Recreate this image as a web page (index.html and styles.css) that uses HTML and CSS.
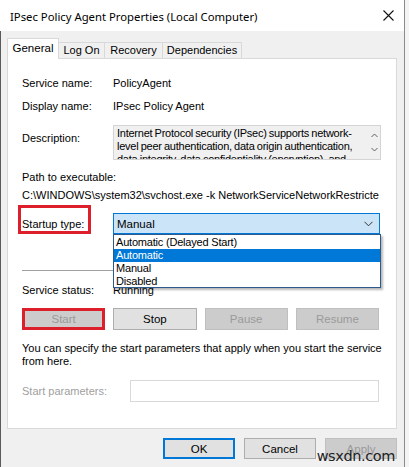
FILE: index.html
```html
<!DOCTYPE html>
<html>
<head>
<meta charset="utf-8">
<link rel="stylesheet" href="styles.css">
</head>
<body>
<div class="window">
  <div class="titlebar">
    <span class="title">IPsec Policy Agent Properties (Local Computer)</span>
    <svg class="close" width="11" height="11" viewBox="0 0 11 11"><path d="M0.5 0.5 L10.5 10.5 M10.5 0.5 L0.5 10.5" stroke="#111" stroke-width="1.1" fill="none"/></svg>
  </div>
  <div class="client">
    <div class="tabs">
      <div class="tab active">General</div>
      <div class="tab t-logon">Log On</div>
      <div class="tab t-recovery">Recovery</div>
      <div class="tab t-dep">Dependencies</div>
    </div>
    <div class="panel">
      <div class="row r-service"><span class="label">Service name:</span><span>PolicyAgent</span></div>
      <div class="row r-display"><span class="label">Display name:</span><span>IPsec Policy Agent</span></div>
      <div class="row r-desc">
        <span class="label desc-label">Description:</span>
        <div class="descbox">
          <div class="desctext">Internet Protocol security (IPsec) supports network-level peer authentication, data origin authentication, data integrity, data confidentiality (encryption), and replay protection.</div>
          <div class="scroll">
            <svg width="7" height="5" viewBox="0 0 7 5"><path d="M0.5 4 L3.5 1 L6.5 4" stroke="#606060" stroke-width="1" fill="none"/></svg>
            <svg width="7" height="5" viewBox="0 0 7 5"><path d="M0.5 1 L3.5 4 L6.5 1" stroke="#606060" stroke-width="1" fill="none"/></svg>
          </div>
        </div>
      </div>
      <div class="pathlabel">Path to executable:</div>
      <div class="pathvalue">C:\WINDOWS\system32\svchost.exe -k NetworkServiceNetworkRestricted</div>
      <div class="row r-startup">
        <span class="label startup-label">Startup type:<span class="mark mark-label"></span></span>
        <div class="combo">
          <span>Manual</span>
          <svg class="chev" width="9" height="6" viewBox="0 0 9 6"><path d="M0.5 0.8 L4.5 4.8 L8.5 0.8" stroke="#333" stroke-width="1" fill="none"/></svg>
          <div class="droplist">
            <div class="item">Automatic (Delayed Start)</div>
            <div class="item sel">Automatic</div>
            <div class="item">Manual</div>
            <div class="item">Disabled</div>
          </div>
        </div>
      </div>
      <div class="sep"></div>
      <div class="row r-status"><span class="label">Service status:</span><span>Running</span></div>
      <div class="buttons">
        <div class="btn disabled start">Start<span class="mark mark-btn"></span></div>
        <div class="btn">Stop</div>
        <div class="btn disabled">Pause</div>
        <div class="btn disabled">Resume</div>
      </div>
      <div class="help">You can specify the start parameters that apply when you start the service from here.</div>
      <div class="row r-params">
        <span class="label params-label">Start parameters:</span>
        <div class="paramsbox"></div>
      </div>
    </div>
    <div class="footer">
      <div class="fbtn default">OK</div>
      <div class="fbtn">Cancel</div>
      <div class="fbtn fdisabled">Apply</div>
    </div>
  </div>
  <div class="watermark">wsxdn.com</div>
</div>
</body>
</html>
```

FILE: styles.css
```css
* { box-sizing: border-box; }
html, body {
  margin: 0;
  padding: 0;
  background: #f4f4f4;
}
body {
  width: 409px;
  height: 467px;
  overflow: hidden;
  font-family: "Liberation Sans", Arial, sans-serif;
  font-size: 11px;
  color: #000;
}
.window {
  position: relative;
  width: 405px;
  height: 467px;
  border-right: 1px solid #8c8c8c;
  display: flex;
  flex-direction: column;
}
.titlebar {
  height: 31px;
  background: #fff;
  display: flex;
  align-items: center;
  padding-left: 10px;
  padding-right: 10px;
  justify-content: space-between;
}
.title {
  font-family: "Noto Sans", "Open Sans", sans-serif;
  font-size: 11.3px;
  color: #000;
  margin-top: 1px;
}
.close { display: block; }
.client {
  flex: 1;
  background: #f0f0f0;
  border-left: 1px solid #5a5a5a;
  padding: 7px 0 0 6px;
}
.tabs {
  display: flex;
  align-items: flex-end;
  height: 20px;
  position: relative;
  z-index: 2;
}
.tab {
  height: 16px;
  border: 1px solid #d9d9d9;
  border-bottom: none;
  border-left: none;
  background: #f0f0f0;
  text-align: center;
  line-height: 15px;
}
.tab.active {
  height: 21px;
  margin-bottom: -1px;
  background: #fff;
  border-left: 1px solid #d9d9d9;
  width: 52px;
  line-height: 17px;
  padding-top: 1px;
  font-size: 11.5px;
}
.t-logon { width: 46px; }
.t-recovery { width: 58px; }
.t-dep { width: 79px; }
.panel {
  width: 390px;
  height: 371px;
  background: #fff;
  border: 1px solid #d9d9d9;
  padding: 17px 0 0 14px;
  display: flex;
  flex-direction: column;
}
.row {
  display: flex;
  align-items: center;
  line-height: 14px;
}
.label { width: 91px; flex: none; }
.r-service { height: 14px; }
.r-display { height: 14px; margin-top: 9px; }
.r-desc { margin-top: 12px; align-items: flex-start; }
.desc-label { padding-top: 6px; }
.descbox {
  width: 268px;
  height: 35px;
  background: #f0f0f0;
  border: 1px solid #d4d4d4;
  display: flex;
  overflow: hidden;
}
.desctext {
  width: 254px;
  flex: none;
  padding: 1px 0 0 3px;
  line-height: 13px;
  letter-spacing: -0.25px;
  word-spacing: -0.5px;
}
.scroll {
  flex: 1;
  display: flex;
  flex-direction: column;
  align-items: center;
  gap: 9px;
  padding-top: 7px;
}
.scroll svg { display: block; }
.pathlabel { margin-top: 10px; line-height: 14px; }
.pathvalue { margin-top: 4px; line-height: 14px; white-space: nowrap; overflow: hidden; width: 357px; }
.r-startup { margin-top: 11px; height: 21px; }
.startup-label { position: relative; }
.mark {
  position: absolute;
  border: 3px solid #dc1f2b;
}
.mark-label { left: -4px; top: -12px; width: 73px; height: 29px; }
.combo {
  position: relative;
  width: 267px;
  height: 21px;
  background: #cce4f7;
  border: 1px solid #0078d7;
  display: flex;
  align-items: center;
  justify-content: space-between;
  padding: 0 6px 0 3px;
  font-size: 11.5px;
}
.chev { display: block; }
.droplist {
  position: absolute;
  left: -1px;
  top: 20px;
  width: 268px;
  height: 54px;
  background: #fff;
  border: 1px solid #2c5a8c;
  box-shadow: 2px 2px 2px rgba(0,0,0,0.28);
  z-index: 5;
  padding-top: 1px;
  font-size: 11px;
  letter-spacing: -0.2px;
}
.item {
  height: 13px;
  line-height: 13px;
  padding-left: 2px;
}
.item.sel { background: #0078d7; color: #fff; }
.sep {
  margin-top: 36px;
  width: 357px;
  height: 1px;
  background: #a0a0a0;
}
.r-status { margin-top: 12px; height: 14px; }
.buttons {
  margin-top: 11px;
  width: 357px;
  display: grid;
  grid-template-columns: repeat(4, 1fr);
  column-gap: 8px;
}
.btn {
  position: relative;
  height: 22px;
  background: #e1e1e1;
  border: 1px solid #adadad;
  display: flex;
  align-items: center;
  justify-content: center;
  font-size: 11.5px;
}
.btn.disabled {
  background: #cccccc;
  border-color: #bfbfbf;
  color: #9a9a9a;
}
.mark-btn { left: -1px; top: -1px; right: -1px; bottom: -1px; }
.help {
  margin-top: 12px;
  width: 360px;
  line-height: 13px;
}
.r-params { margin-top: 12px; height: 22px; }
.params-label { width: 108px; color: #a0a0a0; }
.paramsbox {
  width: 249px;
  height: 22px;
  border: 1px solid #d9d9d9;
  background: #fff;
}
.footer {
  margin-top: 9px;
  width: 390px;
  display: flex;
  justify-content: flex-end;
  gap: 9px;
}
.fbtn {
  width: 72px;
  height: 21px;
  background: #e1e1e1;
  border: 1px solid #adadad;
  display: flex;
  align-items: center;
  justify-content: center;
  font-size: 11.5px;
}
.fbtn.default { border: 2px solid #0078d7; }
.fbtn.fdisabled { background: #cccccc; border-color: #bfbfbf; color: #9a9a9a; }
.watermark {
  position: absolute;
  right: 9px;
  bottom: 3px;
  font-family: "DejaVu Sans", sans-serif;
  font-size: 14.5px;
  color: #222;
  letter-spacing: -0.4px;
  line-height: 15px;
}
```
